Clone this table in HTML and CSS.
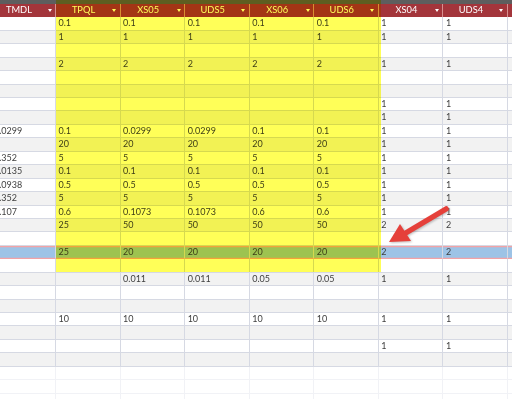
FILE: index.html
```html
<!DOCTYPE html>
<html>
<head>
<meta charset="utf-8">
<link rel="stylesheet" href="styles.css">
</head>
<body>
<div class="sheet">
  <div class="topbar"></div>
  <div class="grid">
    <div class="row head">
      <div class="c"><span>TMDL</span><i class="dd"></i></div>
      <div class="c"><span>TPQL</span><i class="dd"></i></div>
      <div class="c"><span>XS05</span><i class="dd"></i></div>
      <div class="c"><span>UDS5</span><i class="dd"></i></div>
      <div class="c"><span>XS06</span><i class="dd"></i></div>
      <div class="c"><span>UDS6</span><i class="dd"></i></div>
      <div class="c"><span>XS04</span><i class="dd"></i></div>
      <div class="c"><span>UDS4</span><i class="dd"></i></div>
      <div class="c"></div>
    </div>
    <div class="row"><div class="c"></div><div class="c">0.1</div><div class="c">0.1</div><div class="c">0.1</div><div class="c">0.1</div><div class="c">0.1</div><div class="c">1</div><div class="c">1</div><div class="c"></div></div>
    <div class="row alt"><div class="c"></div><div class="c">1</div><div class="c">1</div><div class="c">1</div><div class="c">1</div><div class="c">1</div><div class="c">1</div><div class="c">1</div><div class="c"></div></div>
    <div class="row"><div class="c"></div><div class="c"></div><div class="c"></div><div class="c"></div><div class="c"></div><div class="c"></div><div class="c"></div><div class="c"></div><div class="c"></div></div>
    <div class="row alt"><div class="c"></div><div class="c">2</div><div class="c">2</div><div class="c">2</div><div class="c">2</div><div class="c">2</div><div class="c">1</div><div class="c">1</div><div class="c"></div></div>
    <div class="row"><div class="c"></div><div class="c"></div><div class="c"></div><div class="c"></div><div class="c"></div><div class="c"></div><div class="c"></div><div class="c"></div><div class="c"></div></div>
    <div class="row alt"><div class="c"></div><div class="c"></div><div class="c"></div><div class="c"></div><div class="c"></div><div class="c"></div><div class="c"></div><div class="c"></div><div class="c"></div></div>
    <div class="row"><div class="c"></div><div class="c"></div><div class="c"></div><div class="c"></div><div class="c"></div><div class="c"></div><div class="c">1</div><div class="c">1</div><div class="c"></div></div>
    <div class="row alt"><div class="c"></div><div class="c"></div><div class="c"></div><div class="c"></div><div class="c"></div><div class="c"></div><div class="c">1</div><div class="c">1</div><div class="c"></div></div>
    <div class="row"><div class="c">0.0299</div><div class="c">0.1</div><div class="c">0.0299</div><div class="c">0.0299</div><div class="c">0.1</div><div class="c">0.1</div><div class="c">1</div><div class="c">1</div><div class="c"></div></div>
    <div class="row alt"><div class="c"></div><div class="c">20</div><div class="c">20</div><div class="c">20</div><div class="c">20</div><div class="c">20</div><div class="c">1</div><div class="c">1</div><div class="c"></div></div>
    <div class="row"><div class="c">0.352</div><div class="c">5</div><div class="c">5</div><div class="c">5</div><div class="c">5</div><div class="c">5</div><div class="c">1</div><div class="c">1</div><div class="c"></div></div>
    <div class="row alt"><div class="c">0.0135</div><div class="c">0.1</div><div class="c">0.1</div><div class="c">0.1</div><div class="c">0.1</div><div class="c">0.1</div><div class="c">1</div><div class="c">1</div><div class="c"></div></div>
    <div class="row"><div class="c">0.0938</div><div class="c">0.5</div><div class="c">0.5</div><div class="c">0.5</div><div class="c">0.5</div><div class="c">0.5</div><div class="c">1</div><div class="c">1</div><div class="c"></div></div>
    <div class="row alt"><div class="c">0.352</div><div class="c">5</div><div class="c">5</div><div class="c">5</div><div class="c">5</div><div class="c">5</div><div class="c">1</div><div class="c">1</div><div class="c"></div></div>
    <div class="row"><div class="c">0.107</div><div class="c">0.6</div><div class="c">0.1073</div><div class="c">0.1073</div><div class="c">0.6</div><div class="c">0.6</div><div class="c">1</div><div class="c">1</div><div class="c"></div></div>
    <div class="row alt"><div class="c"></div><div class="c">25</div><div class="c">50</div><div class="c">50</div><div class="c">50</div><div class="c">50</div><div class="c">2</div><div class="c">2</div><div class="c"></div></div>
    <div class="row"><div class="c"></div><div class="c"></div><div class="c"></div><div class="c"></div><div class="c"></div><div class="c"></div><div class="c"></div><div class="c"></div><div class="c"></div></div>
    <div class="row sel"><div class="c"></div><div class="c">25</div><div class="c">20</div><div class="c">20</div><div class="c">20</div><div class="c">20</div><div class="c">2</div><div class="c">2</div><div class="c"></div></div>
    <div class="row"><div class="c"></div><div class="c"></div><div class="c"></div><div class="c"></div><div class="c"></div><div class="c"></div><div class="c"></div><div class="c"></div><div class="c"></div></div>
    <div class="row alt"><div class="c"></div><div class="c"></div><div class="c">0.011</div><div class="c">0.011</div><div class="c">0.05</div><div class="c">0.05</div><div class="c">1</div><div class="c">1</div><div class="c"></div></div>
    <div class="row"><div class="c"></div><div class="c"></div><div class="c"></div><div class="c"></div><div class="c"></div><div class="c"></div><div class="c"></div><div class="c"></div><div class="c"></div></div>
    <div class="row alt"><div class="c"></div><div class="c"></div><div class="c"></div><div class="c"></div><div class="c"></div><div class="c"></div><div class="c"></div><div class="c"></div><div class="c"></div></div>
    <div class="row"><div class="c"></div><div class="c">10</div><div class="c">10</div><div class="c">10</div><div class="c">10</div><div class="c">10</div><div class="c">1</div><div class="c">1</div><div class="c"></div></div>
    <div class="row alt"><div class="c"></div><div class="c"></div><div class="c"></div><div class="c"></div><div class="c"></div><div class="c"></div><div class="c"></div><div class="c"></div><div class="c"></div></div>
    <div class="row"><div class="c"></div><div class="c"></div><div class="c"></div><div class="c"></div><div class="c"></div><div class="c"></div><div class="c">1</div><div class="c">1</div><div class="c"></div></div>
    <div class="row alt"><div class="c"></div><div class="c"></div><div class="c"></div><div class="c"></div><div class="c"></div><div class="c"></div><div class="c"></div><div class="c"></div><div class="c"></div></div>
    <div class="row faint"><div class="c"></div><div class="c"></div><div class="c"></div><div class="c"></div><div class="c"></div><div class="c"></div><div class="c"></div><div class="c"></div><div class="c"></div></div>
    <div class="row faint"><div class="c"></div><div class="c"></div><div class="c"></div><div class="c"></div><div class="c"></div><div class="c"></div><div class="c"></div><div class="c"></div><div class="c"></div></div>
    <div class="row faint"><div class="c"></div><div class="c"></div><div class="c"></div><div class="c"></div><div class="c"></div><div class="c"></div><div class="c"></div><div class="c"></div><div class="c"></div></div>
  </div>
  <div class="mark"></div>
  <svg class="arrow" width="512" height="399" viewBox="0 0 512 399">
    <line x1="446" y1="209" x2="404" y2="234" stroke="#e5403a" stroke-width="5.5" stroke-linecap="round"/>
    <polygon points="389,242 400,224 411,241" fill="#e5403a"/>
  </svg>
</div>
</body>
</html>
```

FILE: styles.css
```css
html, body {
  margin: 0;
  padding: 0;
  background: #ffffff;
}

.sheet {
  position: relative;
  width: 512px;
  height: 399px;
  overflow: hidden;
  font-family: Lato, "Liberation Sans", sans-serif;
  font-size: 9px;
  color: #3e3e3e;
}

.topbar {
  height: 4px;
  background: #5e5e5e;
}

.grid {
  margin-left: -8.57px;
  display: flex;
  flex-direction: column;
}

.row {
  display: flex;
  height: 13.45px;
  background: #ffffff;
  flex: none;
}

.row.alt {
  background: #f2f2f2;
}

.c {
  flex: none;
  width: 64.57px;
  box-sizing: border-box;
  border-right: 1px solid #d6d9e3;
  border-bottom: 1px solid #d6d9e3;
  padding-left: 2.5px;
  line-height: 12.45px;
  white-space: nowrap;
  overflow: hidden;
}

.row.head {
  height: 13.4px;
  background: #a3353b;
  color: #ffffff;
}

.row.head .c {
  display: flex;
  align-items: center;
  padding-left: 0;
  border-bottom: none;
  border-right: 1px solid #d89090;
}

.row.head .c span {
  flex: 1;
  text-align: center;
  font-size: 9.3px;
}

.dd {
  width: 0;
  height: 0;
  border-left: 2.6px solid transparent;
  border-right: 2.6px solid transparent;
  border-top: 3px solid #ffffff;
  margin-right: 3.5px;
  margin-left: 1px;
}

.row.sel {
  background: #9dc3e6;
  box-shadow: inset 0 1.3px #f2a2a6, inset 0 -1.3px #f2a2a6;
}

.row.sel .c {
  border-bottom-color: transparent;
}

.row.faint .c {
  border-color: #f1f2f6;
}

.mark {
  position: absolute;
  left: 56px;
  top: 0;
  width: 325px;
  height: 271.5px;
  background: #ffff58;
  mix-blend-mode: multiply;
}

.arrow {
  position: absolute;
  left: 0;
  top: 0;
  filter: drop-shadow(1px 1px 1px rgba(0, 0, 0, 0.25));
}
```
